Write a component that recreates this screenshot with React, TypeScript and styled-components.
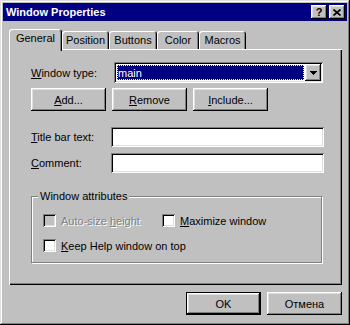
import React from "react";
import styled, { createGlobalStyle, css } from "styled-components";

const GlobalStyle = createGlobalStyle`
  html, body {
    margin: 0;
    padding: 0;
    background: #fff;
  }
  body {
    font-family: "Liberation Sans", Arial, sans-serif;
    font-size: 11px;
    color: #000;
  }
  * {
    box-sizing: border-box;
  }
`;

const raised = css`
  background: #c0c0c0;
  box-shadow: inset -1px -1px 0 #000, inset 1px 1px 0 #fff,
    inset -2px -2px 0 #808080, inset 2px 2px 0 #dfdfdf;
`;

const sunken = css`
  background: #fff;
  box-shadow: inset 1px 1px 0 #808080, inset -1px -1px 0 #fff,
    inset 2px 2px 0 #000, inset -2px -2px 0 #dfdfdf;
`;

const Window = styled.div`
  width: 350px;
  height: 325px;
  padding: 3px;
  background: #c0c0c0;
  box-shadow: inset -1px -1px 0 #000, inset 1px 1px 0 #dfdfdf,
    inset -2px -2px 0 #808080, inset 2px 2px 0 #fff;
  display: flex;
  flex-direction: column;
`;

const TitleBar = styled.div`
  height: 18px;
  background: #000080;
  color: #fff;
  font-weight: bold;
  display: flex;
  align-items: center;
  justify-content: space-between;
  padding: 0 2px 0 3px;
`;

const TitleButtons = styled.div`
  display: flex;
  gap: 2px;
`;

const TitleButton = styled.div`
  width: 16px;
  height: 14px;
  ${raised};
  color: #000;
  display: flex;
  align-items: center;
  justify-content: center;
  font-size: 11px;
  font-weight: bold;
  line-height: 1;
`;

const Body = styled.div`
  padding: 8px 0 0 6px;
  display: flex;
  flex-direction: column;
`;

const TabRow = styled.div`
  display: flex;
  align-items: flex-end;
  height: 20px;
  position: relative;
  z-index: 1;
`;

const Tab = styled.div<{ $active?: boolean; $w: number }>`
  width: ${(p) => p.$w}px;
  height: ${(p) => (p.$active ? 22 : 18)}px;
  margin-bottom: ${(p) => (p.$active ? -2 : 0)}px;
  padding-bottom: ${(p) => (p.$active ? 4 : 0)}px;
  background: #c0c0c0;
  border-radius: 3px 3px 0 0;
  box-shadow: inset 1px 1px 0 #fff, inset -1px 0 0 #000,
    inset -2px 0 0 #808080;
  display: flex;
  align-items: center;
  justify-content: center;
`;

const Panel = styled.div`
  width: 333px;
  height: 236px;
  background: #c0c0c0;
  box-shadow: inset 1px 1px 0 #fff, inset -1px -1px 0 #000,
    inset -2px -2px 0 #808080;
  padding: 13px 0 0 22px;
  display: flex;
  flex-direction: column;
`;

const FieldRow = styled.div<{ $gap?: number }>`
  display: flex;
  align-items: center;
  margin-top: ${(p) => p.$gap ?? 0}px;
`;

const Label = styled.span<{ $w: number }>`
  width: ${(p) => p.$w}px;
`;

const Combo = styled.div`
  width: 209px;
  height: 21px;
  ${sunken};
  padding: 2px;
  display: flex;
`;

const ComboValue = styled.div`
  flex: 1;
  margin: 1px;
  padding-left: 1px;
  background: #000080;
  color: #fff;
  display: flex;
  align-items: center;
  outline: 1px dotted #ffff80;
  outline-offset: -1px;
`;

const DropButton = styled.div`
  width: 16px;
  ${raised};
  display: flex;
  align-items: center;
  justify-content: center;
`;

const TextField = styled.div`
  width: 213px;
  height: 20px;
  ${sunken};
`;

const ButtonRow = styled.div`
  display: flex;
  gap: 6px;
  margin-top: 5px;
`;

const Button = styled.div<{ $default?: boolean }>`
  width: 75px;
  height: 23px;
  background: #c0c0c0;
  display: flex;
  align-items: center;
  justify-content: center;
  box-shadow: ${(p) =>
    p.$default
      ? "inset 0 0 0 1px #000, inset -2px -2px 0 #000, inset 2px 2px 0 #fff, inset -3px -3px 0 #808080, inset 3px 3px 0 #dfdfdf"
      : "inset -1px -1px 0 #000, inset 1px 1px 0 #fff, inset -2px -2px 0 #808080, inset 2px 2px 0 #dfdfdf"};
`;

const Group = styled.div`
  position: relative;
  width: 291px;
  height: 67px;
  margin-top: 23px;
  border: 1px solid #808080;
  box-shadow: inset 1px 1px 0 #fff, 1px 1px 0 #fff;
  padding: 17px 0 0 11px;
`;

const Legend = styled.span`
  position: absolute;
  top: -7px;
  left: 6px;
  padding: 0 2px;
  line-height: 13px;
  background: #c0c0c0;
`;

const CheckGrid = styled.div`
  display: grid;
  grid-template-columns: 119px auto;
  row-gap: 12px;
`;

const CheckItem = styled.div<{ $wide?: boolean; $disabled?: boolean }>`
  display: flex;
  align-items: center;
  gap: 5px;
  height: 13px;
  white-space: nowrap;
  grid-column: ${(p) => (p.$wide ? "1 / -1" : "auto")};
  color: ${(p) => (p.$disabled ? "#808080" : "#000")};
  text-shadow: ${(p) => (p.$disabled ? "1px 1px 0 #fff" : "none")};
`;

const Box = styled.span<{ $disabled?: boolean }>`
  width: 13px;
  height: 13px;
  flex-shrink: 0;
  ${sunken};
  background: ${(p) => (p.$disabled ? "#c0c0c0" : "#fff")};
`;

const Footer = styled.div`
  width: 333px;
  display: flex;
  justify-content: flex-end;
  gap: 6px;
  margin-top: 7px;
`;

const tabs = [
  { label: "General", w: 53, active: true },
  { label: "Position", w: 47 },
  { label: "Buttons", w: 48 },
  { label: "Color", w: 42 },
  { label: "Macros", w: 47 },
];

const CloseGlyph = () => (
  <svg width="8" height="7" viewBox="0 0 8 7">
    <path d="M0.5 0.5 L7.5 6.5 M7.5 0.5 L0.5 6.5" stroke="#000" strokeWidth="1.6" />
  </svg>
);

const ArrowGlyph = () => (
  <svg width="7" height="4" viewBox="0 0 7 4" shapeRendering="crispEdges">
    <path d="M0 0h7v1h-1v1h-1v1h-1v1h-1v-1h-1v-1h-1v-1h-1z" fill="#000" />
  </svg>
);

export default function App() {
  return (
    <>
      <GlobalStyle />
      <Window>
        <TitleBar>
          <span>Window Properties</span>
          <TitleButtons>
            <TitleButton>?</TitleButton>
            <TitleButton>
              <CloseGlyph />
            </TitleButton>
          </TitleButtons>
        </TitleBar>
        <Body>
          <TabRow>
            {tabs.map((t) => (
              <Tab key={t.label} $w={t.w} $active={t.active}>
                {t.label}
              </Tab>
            ))}
          </TabRow>
          <Panel>
            <FieldRow>
              <Label $w={83}>
                <u>W</u>indow type:
              </Label>
              <Combo>
                <ComboValue>main</ComboValue>
                <DropButton>
                  <ArrowGlyph />
                </DropButton>
              </Combo>
            </FieldRow>
            <ButtonRow>
              <Button>
                <u>A</u>dd...
              </Button>
              <Button>
                <u>R</u>emove
              </Button>
              <Button>
                <u>I</u>nclude...
              </Button>
            </ButtonRow>
            <FieldRow $gap={16}>
              <Label $w={80}>
                <u>T</u>itle bar text:
              </Label>
              <TextField />
            </FieldRow>
            <FieldRow $gap={6}>
              <Label $w={80}>
                <u>C</u>omment:
              </Label>
              <TextField />
            </FieldRow>
            <Group>
              <Legend>Window attributes</Legend>
              <CheckGrid>
                <CheckItem $disabled>
                  <Box $disabled />
                  <span>
                    Auto-size <u>h</u>eight
                  </span>
                </CheckItem>
                <CheckItem>
                  <Box />
                  <span>
                    <u>M</u>aximize window
                  </span>
                </CheckItem>
                <CheckItem $wide>
                  <Box />
                  <span>
                    <u>K</u>eep Help window on top
                  </span>
                </CheckItem>
              </CheckGrid>
            </Group>
          </Panel>
          <Footer>
            <Button $default>OK</Button>
            <Button>Отмена</Button>
          </Footer>
        </Body>
      </Window>
    </>
  );
}
